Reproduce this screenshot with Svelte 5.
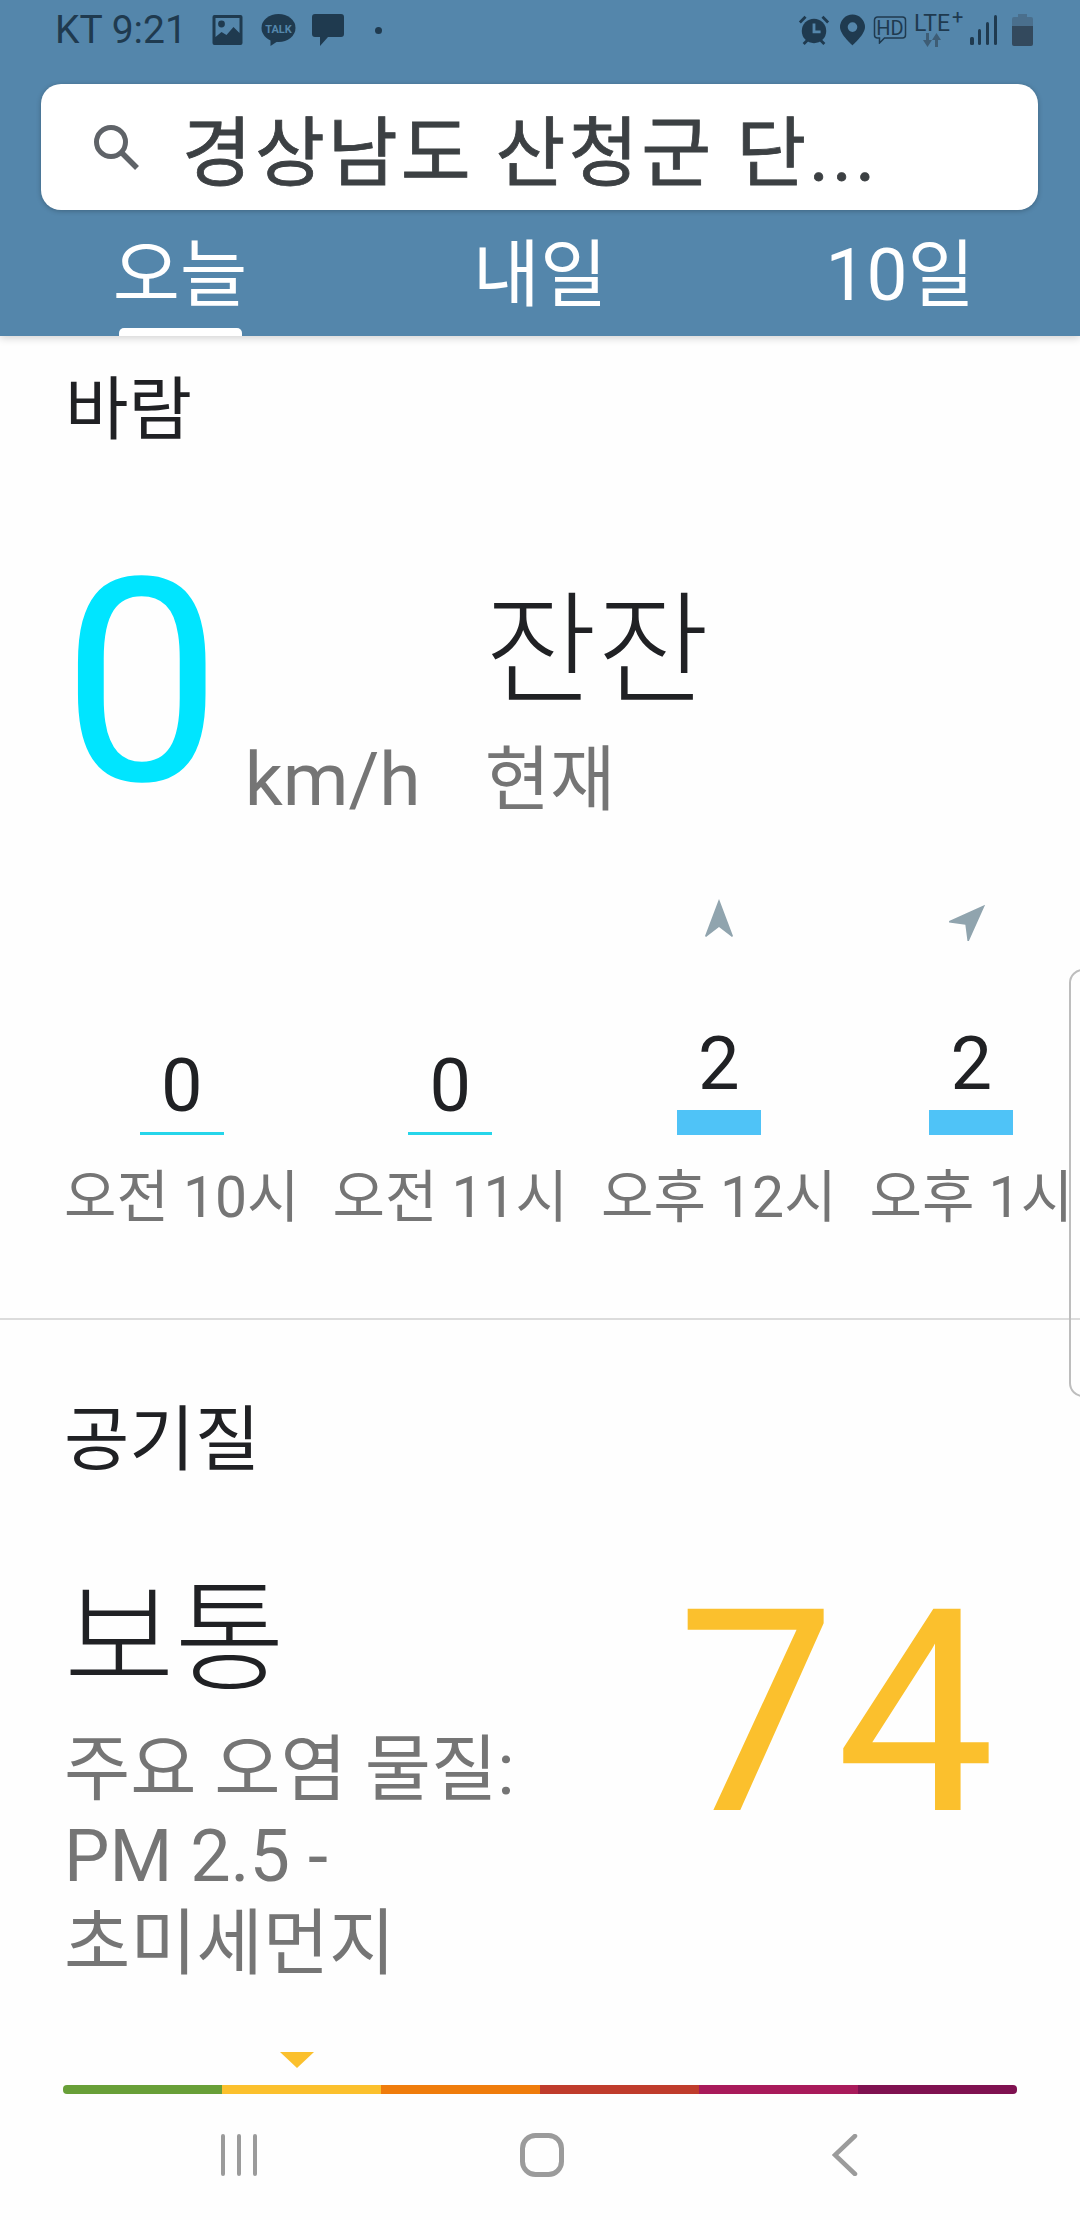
<script>
	const hours = [
		{ label: '오전 10시', value: 0, bar: 'thin' },
		{ label: '오전 11시', value: 0, bar: 'thin' },
		{ label: '오후 12시', value: 2, bar: 'thick', dir: 0 },
		{ label: '오후 1시', value: 2, bar: 'thick', dir: 45 }
	];
	const scale = ['#689f38', '#fbc02d', '#ef7c0c', '#bf3c2c', '#a81a5a', '#7f1150'];
</script>

<div class="screen">
	<header class="top">
		<div class="status">
			<span class="carrier">KT 9:21</span>
			<svg class="ico img" width="31" height="30" viewBox="0 0 30 30">
				<path fill="#1f3a4f" fill-rule="evenodd" d="M2 0h26a2 2 0 0 1 2 2v26a2 2 0 0 1-2 2H2a2 2 0 0 1-2-2V2a2 2 0 0 1 2-2zM3 3v19l6-5 5 3 7-8 6 6V3z" />
				<circle cx="9" cy="9" r="3.4" fill="#1f3a4f" />
			</svg>
			<svg class="ico kakao" width="35" height="34" viewBox="0 0 34 34">
				<ellipse cx="17" cy="15" rx="17" ry="14" fill="#1f3a4f" />
				<path d="M9 25l0 8 9-6z" fill="#1f3a4f" />
				<text x="17" y="19.500" class="talk">TALK</text>
			</svg>
			<svg class="ico msg" width="34" height="33" viewBox="0 0 32 33">
				<path fill="#1f3a4f" d="M3 0h26a3 3 0 0 1 3 3v17a3 3 0 0 1-3 3H16l-8 9v-9H3a3 3 0 0 1-3-3V3a3 3 0 0 1 3-3z" />
			</svg>
			<span class="dot"></span>
			<span class="spacer"></span>
			<svg class="ico" width="32" height="32" viewBox="0 0 34 34">
				<circle cx="17" cy="18" r="13" fill="#1f3a4f" />
				<path d="M17 10v9h7" fill="none" stroke="#5486ab" stroke-width="3" />
				<path d="M2 9l6-6M32 9l-6-6M6 32l4-4M28 32l-4-4" stroke="#1f3a4f" stroke-width="3" />
			</svg>
			<svg class="ico pin" width="25" height="32" viewBox="0 0 26 32">
				<path fill="#1f3a4f" fill-rule="evenodd" d="M13 0a13 13 0 0 1 13 13c0 8-13 19-13 19S0 21 0 13A13 13 0 0 1 13 0zm0 8a5 5 0 1 0 0 10 5 5 0 0 0 0-10z" />
			</svg>
			<svg class="ico hdv" width="34" height="28" viewBox="0 0 33 28">
				<path fill="none" stroke="#1f3a4f" stroke-width="1.500" d="M4 1h25a3 3 0 0 1 3 3v15a3 3 0 0 1-3 3H11l-5 5v-5H4a3 3 0 0 1-3-3V4a3 3 0 0 1 3-3z" />
				<text x="16.500" y="18.500" class="hd">HD</text>
			</svg>
			<div class="lte">
				<span class="lte-text">LTE</span>
				<span class="plus">+</span>
				<svg width="20" height="14" viewBox="0 0 20 14">
					<path fill="#3e5d75" d="M4 0h3v7h3l-4.500 7L1 7h3zM13 14h3V7h3l-4.500-7L10 7h3z" />
				</svg>
			</div>
			<svg class="ico bars" width="28" height="30" viewBox="0 0 28 30">
				<g fill="#1f3a4f">
					<rect x="0" y="22" width="4" height="8" rx="1.500" />
					<rect x="8" y="14" width="3" height="16" rx="1.500" />
					<rect x="16" y="7" width="3" height="23" rx="1.500" />
					<rect x="24" y="0" width="3" height="30" rx="1.500" />
				</g>
			</svg>
			<svg class="ico batt" width="21" height="32" viewBox="0 0 21 32">
				<path fill="#4a6f8d" d="M6 0h9v3h4a2 2 0 0 1 2 2v7H0V5a2 2 0 0 1 2-2h4z" />
				<path fill="#33495d" d="M0 12h21v18a2 2 0 0 1-2 2H2a2 2 0 0 1-2-2z" />
			</svg>
		</div>

		<div class="search">
			<svg width="46" height="46" viewBox="0 0 46 46">
				<circle cx="18" cy="18" r="14.500" fill="none" stroke="#5f6368" stroke-width="5" />
				<path d="M28 28l16 16" stroke="#5f6368" stroke-width="5.500" />
			</svg>
			<span class="query">경상남도 산청군 단...</span>
		</div>

		<nav class="tabs">
			<span class="tab active">오늘</span>
			<span class="tab">내일</span>
			<span class="tab">10일</span>
		</nav>
	</header>

	<section class="wind">
		<h2>바람</h2>
		<div class="now">
			<span class="speed">0</span>
			<span class="unit">km/h</span>
			<div class="desc">
				<span class="calm">잔잔</span>
				<span class="when">현재</span>
			</div>
		</div>
		<div class="hours">
			{#each hours as h}
				<div class="hour">
					<div class="arrow">
						{#if h.dir !== undefined}
							<svg width="30" height="40" viewBox="0 0 30 40" style="transform: rotate({h.dir}deg)">
								<path fill="#90a4ae" d="M15 0l14 37-1 1-13-10L2 38l-1-1z" />
							</svg>
						{/if}
					</div>
					<div class="plot">
						<span class="num">{h.value}</span>
						<span class={h.bar}></span>
					</div>
					<span class="label">{h.label}</span>
				</div>
			{/each}
		</div>
	</section>

	<section class="air">
		<h2>공기질</h2>
		<div class="summary">
			<div class="text">
				<span class="level">보통</span>
				<p>주요 오염 물질:<br />PM 2.5 -<br />초미세먼지</p>
			</div>
			<span class="index">74</span>
		</div>
		<div class="marker"></div>
		<div class="scale">
			{#each scale as c}
				<span style="background: {c}"></span>
			{/each}
		</div>
	</section>

	<footer class="nav">
		<svg width="38" height="42" viewBox="0 0 38 42">
			<path d="M3 2v38M19 2v38M35 2v38" stroke="#9b9b9b" stroke-width="4" stroke-linecap="round" />
		</svg>
		<svg class="home" width="44" height="44" viewBox="0 0 44 44">
			<rect x="2.500" y="2.500" width="39" height="39" rx="13" fill="none" stroke="#9b9b9b" stroke-width="5" />
		</svg>
		<svg class="back" width="26" height="42" viewBox="0 0 26 42">
			<path d="M23 2L3 21l20 19" fill="none" stroke="#9b9b9b" stroke-width="4.500" stroke-linecap="round" />
		</svg>
	</footer>

	<div class="handle"></div>
</div>

<style>
	:global(body) {
		margin: 0;
		background: #fff;
	}

	.screen {
		position: relative;
		display: flex;
		flex-direction: column;
		width: 1080px;
		height: 2220px;
		overflow: hidden;
		background: #fefefe;
		font-family: Roboto, 'Noto Sans CJK KR', sans-serif;
		color: #202124;
	}

	.top {
		flex: none;
		height: 336px;
		background: #5486ab;
		box-shadow: 0 2px 8px rgba(0, 0, 0, 0.18);
		position: relative;
		z-index: 1;
	}

	.status {
		display: flex;
		align-items: center;
		height: 60px;
		padding: 0 47px 0 55px;
		color: #1f3a4f;
	}

	.carrier {
		font-size: 39px;
	}

	.ico {
		flex: none;
	}

	.img {
		margin-left: 25px;
	}

	.kakao {
		margin-left: 18px;
	}

	.msg {
		margin-left: 15px;
	}

	.pin {
		margin-left: 10px;
	}

	.hdv {
		margin-left: 8px;
	}

	.bars {
		margin-left: 7px;
	}

	.batt {
		margin-left: 14px;
	}

	.talk {
		font: 700 11px Roboto, sans-serif;
		fill: #5486ab;
		text-anchor: middle;
	}

	.hd {
		font: 400 20px Roboto, sans-serif;
		fill: #1f3a4f;
		text-anchor: middle;
	}

	.dot {
		width: 7px;
		height: 7px;
		margin-left: 30px;
		border-radius: 50%;
		background: #1f3a4f;
	}

	.spacer {
		flex: 1;
	}

	.lte {
		display: flex;
		flex-direction: column;
		align-items: flex-start;
		width: 49px;
		margin-left: 7px;
		position: relative;
		font-size: 23px;
		line-height: 19px;
		white-space: nowrap;
		color: #1f3a4f;
	}

	.lte svg {
		margin-left: 8px;
	}

	.plus {
		position: absolute;
		left: 38px;
		top: -6px;
		font-size: 20px;
	}

	.search {
		display: flex;
		align-items: center;
		margin: 24px 42px 0 41px;
		height: 126px;
		padding-left: 52px;
		background: #fff;
		border-radius: 20px;
		box-shadow: 0 1px 5px rgba(0, 0, 0, 0.25);
	}

	.query {
		margin-left: 43px;
		font-size: 76px;
		letter-spacing: 3px;
		color: #3c4043;
		-webkit-text-stroke: 0.8px #3c4043;
		white-space: nowrap;
	}

	.tabs {
		display: flex;
		padding-top: 2px;
	}

	.tab {
		flex: 1;
		height: 124px;
		text-align: center;
		font-size: 73px;
		line-height: 126px;
		color: #fff;
		position: relative;
	}

	.tab.active::after {
		content: '';
		position: absolute;
		left: 119px;
		bottom: 0;
		width: 123px;
		height: 8px;
		background: #fff;
		border-radius: 5px 5px 0 0;
	}

	h2 {
		margin: 0;
		font-size: 71px;
		font-weight: 400;
		line-height: 1;
	}

	.wind {
		flex: none;
		height: 984px;
		padding: 40px 0 0 65px;
		border-bottom: 2px solid #dcdcdc;
		box-sizing: border-box;
	}

	.wind h2 {
		font-size: 69px;
		margin-bottom: 2px;
	}

	.now {
		display: flex;
		align-items: flex-end;
		height: 300px;
		margin-top: 85px;
	}

	.speed {
		font-size: 284px;
		font-weight: 400;
		line-height: 294px;
		color: #00e5ff;
		margin-left: -3px;
	}

	.unit {
		margin: 0 0 9px 23px;
		font-size: 75px;
		line-height: 84px;
		color: #757575;
	}

	.desc {
		display: flex;
		flex-direction: column;
		margin: 0 0 8px 64px;
	}

	.calm {
		margin-bottom: 12px;
		font-size: 122px;
		font-weight: 300;
		line-height: 148px;
	}

	.when {
		font-size: 71px;
		line-height: 84px;
		color: #757575;
	}

	.hours {
		display: flex;
		gap: 33px;
		margin: 69px 0 0 -1px;
	}

	.hour {
		display: flex;
		flex-direction: column;
		align-items: center;
		flex: none;
	}

	.arrow {
		height: 43px;
	}

	.plot {
		display: flex;
		flex-direction: column;
		align-items: center;
		justify-content: flex-end;
		height: 193px;
	}

	.num {
		font-size: 74px;
		line-height: 70px;
	}

	.thin {
		width: 84px;
		height: 3px;
		margin-top: 11px;
		background: #26d5ea;
	}

	.thick {
		width: 84px;
		height: 25px;
		margin-top: 11px;
		background: #4fc3f7;
	}

	.label {
		margin-top: 27px;
		font-size: 57px;
		line-height: 72px;
		color: #757575;
		white-space: nowrap;
	}

	.air {
		flex: none;
		padding: 84px 62px 0 64px;
	}

	.summary {
		display: flex;
		justify-content: space-between;
		margin-top: 97px;
		height: 480px;
	}

	.text {
		display: flex;
		flex-direction: column;
	}

	.level {
		font-size: 120px;
		font-weight: 300;
		line-height: 136px;
	}

	.text p {
		margin: 18px 0 0;
		font-size: 72px;
		line-height: 87px;
		color: #757575;
	}

	.index {
		font-size: 283px;
		font-weight: 400;
		line-height: 282px;
		color: #fbc02d;
		margin-right: 23px;
	}

	.marker {
		width: 0;
		height: 0;
		margin: 0 0 17px 216px;
		border-left: 17px solid transparent;
		border-right: 17px solid transparent;
		border-top: 16px solid #fbc02d;
	}

	.scale {
		display: flex;
		width: 954px;
		height: 9px;
		margin-left: -1px;
		border-radius: 4px;
		overflow: hidden;
	}

	.scale span {
		flex: 1;
	}

	.nav {
		display: flex;
		align-items: center;
		height: 46px;
		margin-top: auto;
		margin-bottom: 42px;
		padding-left: 220px;
	}

	.home {
		margin-left: 262px;
	}

	.back {
		margin-left: 268px;
	}

	.handle {
		position: absolute;
		left: 1069px;
		top: 969px;
		width: 30px;
		height: 428px;
		border: 2px solid #bdbdbd;
		border-radius: 14px;
		box-sizing: border-box;
	}
</style>
